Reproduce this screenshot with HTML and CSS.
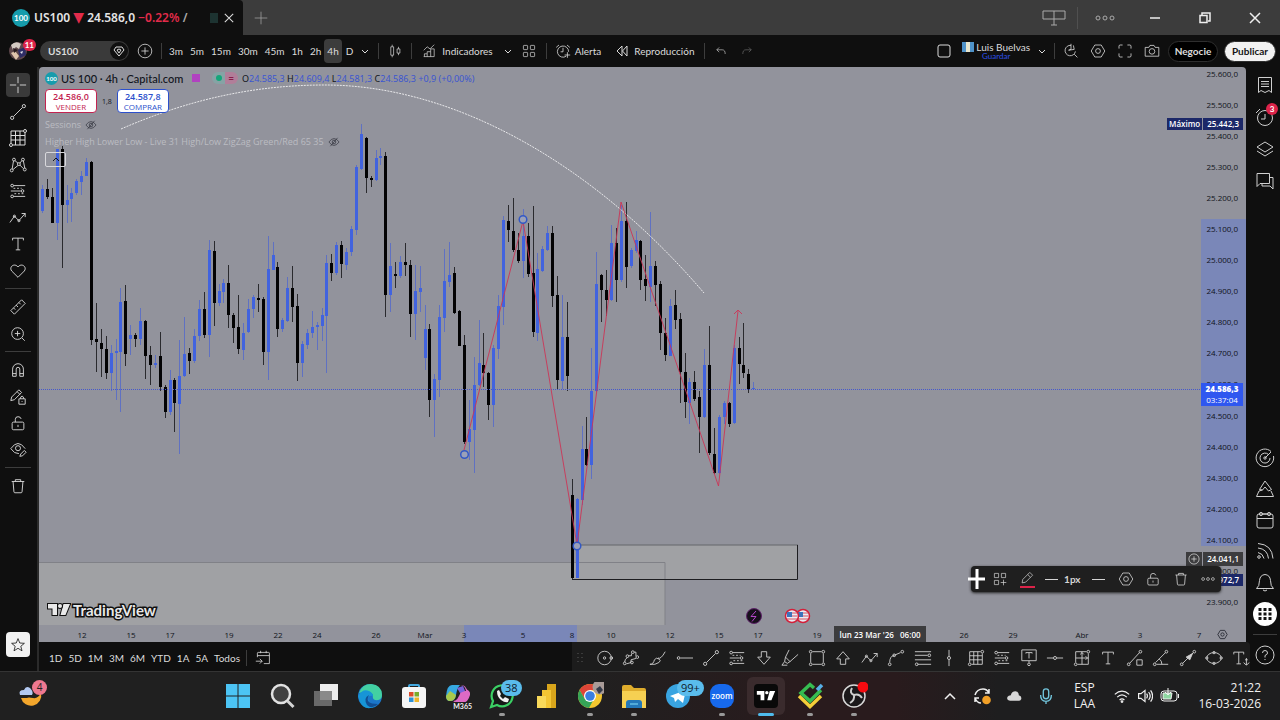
FILE: index.html
```html
<!DOCTYPE html>
<html lang="es">
<head>
<meta charset="utf-8">
<title>US100 24.586,0 −0.22%</title>
<link rel="stylesheet" href="styles.css">
</head>
<body>
<svg class="defs" aria-hidden="true">
  <symbol id="cross" viewBox="0 0 20 20"><path d="M10 1v7M10 12v7M1 10h7M12 10h7"/></symbol>
  <symbol id="trend" viewBox="0 0 20 20"><circle cx="3.500" cy="16.500" r="1.800"/><circle cx="16.500" cy="3.500" r="1.800"/><path d="M5 15L15 5"/></symbol>
  <symbol id="grid" viewBox="0 0 20 20"><path d="M3 3h12M17 5v12H5M3 15V3M3 7.500h14M3 12h14M7.500 3v14M12 3v14"/><circle cx="17" cy="3" r="1.500"/><circle cx="3" cy="17" r="1.500"/></symbol>
  <symbol id="xabcd" viewBox="0 0 20 20"><circle cx="3" cy="16" r="1.600"/><circle cx="5.500" cy="4" r="1.600"/><circle cx="11" cy="9" r="1.600"/><circle cx="15.500" cy="4" r="1.600"/><circle cx="17.500" cy="15" r="1.600"/><path d="M3.500 14.500L5 5.500M6.500 5L10 8M12 8l2.500-3M16 5.500l1.500 8M4.500 15L10 10.500M12 10l4 4"/></symbol>
  <symbol id="fib" viewBox="0 0 20 20"><path d="M5 4h13M2 10h11M5 16h13" /><path d="M5 7h9M6 13h11" stroke-dasharray="2 2"/><circle cx="3.500" cy="4" r="1.500"/><circle cx="15" cy="10" r="1.500"/><circle cx="3.500" cy="16" r="1.500"/></symbol>
  <symbol id="wave" viewBox="0 0 20 20"><path d="M1 15l5-7 5 5 7-8M14 5h4v4"/><circle cx="6" cy="8" r="1.200"/><circle cx="11" cy="13" r="1.200"/></symbol>
  <symbol id="tee" viewBox="0 0 20 20"><path d="M4 6V3.500h12V6M10 3.500v13M7.500 16.500h5"/></symbol>
  <symbol id="heart" viewBox="0 0 20 20"><path d="M10 17L3 10C-.5 5.500 6 .5 10 5.500 14 .5 20.500 5.500 17 10z"/></symbol>
  <symbol id="ruler" viewBox="0 0 20 20"><path d="M2 14L14 2l4 4L6 18zM5 11l2 2M8 8l2 2M11 5l2 2"/></symbol>
  <symbol id="zoomin" viewBox="0 0 20 20"><circle cx="9.500" cy="9.500" r="6.500"/><path d="M9.500 6.500v6M6.500 9.500h6M14.500 14.500l3 3"/></symbol>
  <symbol id="magnet" viewBox="0 0 20 20"><path d="M4 17V9a6 6 0 0 1 12 0v8h-4V9a2 2 0 0 0-4 0v8zM4 14h4M12 14h4"/></symbol>
  <symbol id="penlock" viewBox="0 0 20 20"><path d="M2 14l1-4 8-8 3 3-8 8zM9 4l3 3M11 12h7v6h-7zM13 12v-2q1.500-2 3 0v2M14.500 14.500v1"/></symbol>
  <symbol id="lock" viewBox="0 0 20 20"><rect x="3.500" y="9" width="13" height="8.500" rx="1.500"/><path d="M7 9V6q0-3 3-3t3.500 2.500M10 12v2.500"/></symbol>
  <symbol id="eyepen" viewBox="0 0 20 20"><path d="M2 8.500Q10-3 18 8.500M2 8.500q4 6 9 5.500"/><circle cx="10" cy="8" r="2.800"/><path d="M12 17l1-2.500 4-4 2 2-4 4z"/></symbol>
  <symbol id="trash" viewBox="0 0 20 20"><path d="M3 5h14M7 5V3h6v2M4.500 5l1 11.500q.2 1 1 1h7q.8 0 1-1l1-11.500"/></symbol>
  <symbol id="star" viewBox="0 0 20 20"><path d="M10 2l2.200 5.500 5.800.4-4.500 3.700 1.500 5.700-5-3.200-5 3.200 1.500-5.700L2 7.900l5.800-.4z"/></symbol>
  <symbol id="chev" viewBox="0 0 10 10"><path d="M2 4l3 3 3-3"/></symbol>
  <symbol id="plusc" viewBox="0 0 20 20"><circle cx="10" cy="10" r="8.500"/><path d="M10 5.500v9M5.500 10h9"/></symbol>
  <symbol id="hex" viewBox="0 0 20 20"><path d="M6 2.500h8l4.500 7.500-4.500 7.500H6L1.500 10z"/><circle cx="10" cy="10" r="3"/></symbol>
  <symbol id="dots" viewBox="0 0 20 20"><circle cx="3" cy="10" r="2"/><circle cx="10" cy="10" r="2"/><circle cx="17" cy="10" r="2"/></symbol>
  <symbol id="layout" viewBox="0 0 20 20"><rect x="2" y="2" width="6" height="6" rx="1"/><rect x="12" y="2" width="6" height="6" rx="1"/><rect x="2" y="12" width="6" height="6" rx="1"/><rect x="12" y="12" width="6" height="6" rx="1"/></symbol>
  <symbol id="clock" viewBox="0 0 20 20"><path d="M14 16.500A7 7 0 1 1 17 11M10 6v5H7M1.500 5.500l3.500-3M18.500 5.500L15 2.500M12 15h7M15.500 11.500v7"/></symbol>
  <symbol id="undo" viewBox="0 0 20 20"><path d="M7 4L3 8l4 4M3 8h9q5 0 5 7"/></symbol>
  <symbol id="hideeye" viewBox="0 0 20 20"><path d="M1.500 10Q10-1.500 18.500 10 10 21.500 1.500 10z"/><circle cx="10" cy="10" r="3"/><path d="M4 17L16 3"/></symbol>
  <symbol id="candles" viewBox="0 0 20 20"><path d="M4 4h4v12H4zM6 1v3M6 16v3M13 7h4v6h-4zM15 4v3M15 13v3"/></symbol>
  <symbol id="lens" viewBox="0 0 20 20"><path d="M10 3a6.500 6.500 0 1 0 5.500 7.500M10 1v7l-3 1 7-1-1-5M14 14l4 4"/></symbol>
  <symbol id="full" viewBox="0 0 20 20"><path d="M2.500 7V4q0-1.500 1.500-1.500h3M13 2.500h3q1.500 0 1.500 1.500v3M17.500 13v3q0 1.500-1.500 1.500h-3M7 17.500H4q-1.500 0-1.500-1.500v-3"/></symbol>
  <symbol id="camera" viewBox="0 0 20 20"><path d="M1.500 5.500H6L7.500 3h5L14 5.500h4.500v11h-17z"/><circle cx="10" cy="10.500" r="3.500"/></symbol>
  <symbol id="list" viewBox="0 0 20 20"><path d="M3.500 2.500h13v15L14 15.500l-4 2-4-2-2.500 2zM6 6.500h8M6 9h8M6 11.500h8"/></symbol>
  <symbol id="layers" viewBox="0 0 20 20"><path d="M10 3l8 5-8 5-8-5zM2 12l8 5 8-5"/></symbol>
  <symbol id="chat" viewBox="0 0 20 20"><path d="M2 2.500h12.500v10H5l-3 3zM14.500 6.500H18V18l-3-3H7v-2.500"/></symbol>
  <symbol id="radar" viewBox="0 0 20 20"><path d="M16 3.500A8.800 8.800 0 1 0 18.500 8M13.500 6.500A5 5 0 1 0 15 10M10 10l6-6"/><circle cx="10" cy="10" r="1.200"/></symbol>
  <symbol id="peak" viewBox="0 0 20 20"><path d="M10 2L4.500 10.500l3 .5 2.500-3 3.500 4 3-1.500zM4 12l-2.500 5.500h17L16 12M7.500 11L4 12"/></symbol>
  <symbol id="cal" viewBox="0 0 20 20"><rect x="2" y="4" width="16" height="14" rx="2"/><path d="M2 8.500h16M8 4h4"/><circle cx="6" cy="4" r="1.600"/><circle cx="14" cy="4" r="1.600"/></symbol>
  <symbol id="feed" viewBox="0 0 20 20"><path d="M3 2.500q14 1 15 15M3 7q9.500 1 10.500 10.500M3 11.500q5 1 6 6"/><circle cx="4" cy="16" r="1.300"/></symbol>
  <symbol id="bell" viewBox="0 0 20 20"><path d="M1.500 16.500q3-2 3-8Q5 3 10 2.500q5 .5 5.500 6 0 6 3 8zM8 18q2 2 4 0"/></symbol>
  <symbol id="help" viewBox="0 0 20 20"><circle cx="10" cy="10" r="9"/><path d="M7.500 8q0-2.500 2.500-2.500T12.500 8q0 1.500-2.500 2.500v2M10 14v1"/></symbol>
  <symbol id="circ" viewBox="0 0 20 20"><circle cx="9.500" cy="10" r="7.500"/><circle cx="9.500" cy="10" r="1.300"/><circle cx="17" cy="10" r="1.500"/></symbol>
  <symbol id="poly" viewBox="0 0 20 20"><path d="M3 14.500q0-3.500 3-5M7.500 7.500h3V5M13.500 3.500h2V8M15.500 10.500L10 12v3l-5 1.500"/><circle cx="3" cy="16" r="1.500"/><circle cx="6" cy="8" r="1.500"/><circle cx="12" cy="3.500" r="1.500"/><circle cx="17" cy="9" r="1.500"/><circle cx="11" cy="15" r="1.500"/></symbol>
  <symbol id="brush" viewBox="0 0 20 20"><path d="M1 17q4 0 5-5 2-3 5-1t0 4q-4 3-10 2zM10 10q3 2 8-7"/></symbol>
  <symbol id="ray" viewBox="0 0 20 20"><circle cx="4" cy="10" r="1.500"/><path d="M6 10h14"/></symbol>
  <symbol id="down" viewBox="0 0 20 20"><path d="M7 3h6v6h4l-7 8-7-8h4z"/></symbol>
  <symbol id="up" viewBox="0 0 20 20"><path d="M7 17h6v-6h4l-7-8-7 8h4z"/></symbol>
  <symbol id="marker" viewBox="0 0 20 20"><path d="M9 1L5 9l5 5 9-8M5 9l-1 5 3 2 3-2M1 18h6M4 14l-3 4"/></symbol>
  <symbol id="rect" viewBox="0 0 20 20"><path d="M5 3h10M5 17h10M3 5v10M17 5v10"/><circle cx="3" cy="3" r="1.500"/><circle cx="17" cy="3" r="1.500"/><circle cx="3" cy="17" r="1.500"/><circle cx="17" cy="17" r="1.500"/></symbol>
  <symbol id="curve" viewBox="0 0 20 20"><path d="M3 15q0-7 5-8l7-3"/><circle cx="3" cy="17" r="1.500"/><circle cx="8" cy="7" r="1.500"/><circle cx="17" cy="3" r="1.500"/></symbol>
  <symbol id="lines" viewBox="0 0 20 20"><path d="M1 3h18M1 7h14M1 12h18M4 17h15"/><circle cx="17" cy="7" r="1.500"/><circle cx="3" cy="17" r="1.500"/></symbol>
  <symbol id="vert" viewBox="0 0 20 20"><path d="M10 1v7M10 12v7"/><circle cx="10" cy="10" r="1.700"/></symbol>
  <symbol id="horiz" viewBox="0 0 20 20"><path d="M1 10h7M12 10h7"/><circle cx="10" cy="10" r="1.700"/></symbol>
  <symbol id="tbox" viewBox="0 0 20 20"><path d="M2 1h16v12H2zM6.500 5V4h7v1M10 4v6.500M10 13v2"/><circle cx="10" cy="17" r="1.500"/></symbol>
  <symbol id="box4" viewBox="0 0 20 20"><path d="M3 3h12M17 5v12H5M3 15V3M3 10h14M10 3v14M8 6l2-2 2 2M14 8l2 2-2 2"/><circle cx="17" cy="3" r="1.500"/><circle cx="3" cy="17" r="1.500"/></symbol>
  <symbol id="linesq" viewBox="0 0 20 20"><path d="M4 16L15 4M12 12h6v6h-6z"/><circle cx="3" cy="17" r="1.500"/><circle cx="16" cy="3" r="1.500"/></symbol>
  <symbol id="angle" viewBox="0 0 20 20"><path d="M5 17h13M4 15L15 4M8 11q3 2 3 6"/><circle cx="3" cy="17" r="1.500"/><circle cx="16" cy="3" r="1.500"/></symbol>
  <symbol id="arrow" viewBox="0 0 20 20"><path d="M4 16L16 4"/><path class="solid" d="M8 9l4 3 3-7z"/><circle cx="3" cy="17" r="1.500"/><circle cx="17" cy="3" r="1.500"/></symbol>
  <symbol id="oval" viewBox="0 0 20 20"><ellipse cx="10" cy="10" rx="8" ry="6"/><circle cx="2" cy="10" r="1.300"/><circle cx="18" cy="10" r="1.300"/><circle cx="10" cy="4" r="1.300"/><circle cx="10" cy="16" r="1.300"/></symbol>
  <symbol id="tanchor" viewBox="0 0 20 20"><path d="M2 6V3.500h11V6M7.500 3.500v13M5 16.500h5M16 10v8M13 15q3 5 6 0M14.500 12h3"/></symbol>
  <symbol id="tv" viewBox="0 0 24 14"><path d="M1 1h9v11H5.500V5.500H1zM16.500 1H23l-4.500 11h-5z"/><circle cx="13" cy="3" r="2"/></symbol>
</svg>

<header class="tabs">
  <div class="tab">
    <span class="coin">100</span>
    <span class="tab-text">US100 <span class="red tri">▼</span> 24.586,0 <span class="red">−0.22%</span> <span class="dim">/</span></span>
    <span class="fade"></span>
    <button class="plain" aria-label="Cerrar pestaña"><svg class="ic i14 bold" viewBox="0 0 20 20"><path d="M4 4l12 12M16 4L4 16"/></svg></button>
  </div>
  <button class="plain newtab" aria-label="Nueva pestaña"><svg class="ic i14" viewBox="0 0 20 20"><path d="M10 1v18M1 10h18"/></svg></button>
  <div class="window">
    <button class="plain" aria-label="Monitores"><svg class="ic w24" viewBox="0 0 24 18"><path d="M1 2h22v8H1zM12 2v14M9 16h6"/></svg></button>
    <i class="vr tall"></i>
    <button class="plain" aria-label="Más"><svg class="ic i20"><use href="#dots"/></svg></button>
    <button class="plain" aria-label="Minimizar"><svg class="ic i12 bold" viewBox="0 0 12 12"><path d="M1 6h10"/></svg></button>
    <button class="plain" aria-label="Restaurar"><svg class="ic i12 bold" viewBox="0 0 12 12"><path d="M1 3.500h7v7H1zM3 3V1h8v8H9"/></svg></button>
    <button class="plain" aria-label="Cerrar"><svg class="ic i12 bold" viewBox="0 0 12 12"><path d="M1 1l10 10M11 1L1 11"/></svg></button>
  </div>
</header>

<nav class="toolbar">
  <div class="avatar"><svg viewBox="0 0 20 20" class="i20"><circle cx="10" cy="10" r="9" fill="#5e474b"/><path d="M3 4q5-5 10-1l-2 5-3-2-3 3z" fill="#d3c9c2"/><path d="M10 9l7-3 1 8-6 3z" fill="#2e2c65"/><path d="M3 12l4-2 4 5-3 4z" fill="#dfc4ac"/><path d="M5 7l5 2-4 3z" fill="#271a1f"/><path d="M12 11l3-1-1 3z" fill="#e4e0ea"/></svg><span class="badge">11</span></div>
  <button class="search"><span>US100</span><span class="gem"><svg class="ic i12" viewBox="0 0 12 12"><path d="M3 2h6l2 3-5 6-5-6zM4 5l2 3 2-3-2-1z"/></svg></span></button>
  <button class="plain add" aria-label="Comparar"><svg class="ic i16"><use href="#plusc"/></svg></button>
  <i class="vr"></i>
  <div class="intervals"><button>3m</button><button>5m</button><button>15m</button><button>30m</button><button>45m</button><button>1h</button><button>2h</button><button class="on">4h</button><button>D</button><button aria-label="Intervalos"><svg class="ic i10"><use href="#chev"/></svg></button></div>
  <i class="vr"></i>
  <button class="plain w32" aria-label="Velas"><svg class="ic i14"><use href="#candles"/></svg></button>
  <i class="vr"></i>
  <button class="plain indic"><svg class="ic i14" viewBox="0 0 20 20"><path d="M2 18v-4h4v4M6 14v-3h5v7M11 11V7h5v11H1M1 9l5-5 4 3 6-6"/></svg>Indicadores</button>
  <button class="plain w24" aria-label="Favoritos"><svg class="ic i10"><use href="#chev"/></svg></button>
  <button class="plain lay" aria-label="Plantillas"><svg class="ic i14"><use href="#layout"/></svg></button>
  <i class="vr"></i>
  <button class="plain alert"><svg class="ic i16"><use href="#clock"/></svg>Alerta</button>
  <button class="plain replay"><svg class="ic i12" viewBox="0 0 12 12"><path d="M6 1v10L1 6zM11 1v10L6.500 6z"/></svg>Reproducción</button>
  <i class="vr"></i>
  <button class="plain w32" aria-label="Deshacer"><svg class="ic i12"><use href="#undo"/></svg></button>
  <button class="plain w20 muted" aria-label="Rehacer"><svg class="ic i12 flip"><use href="#undo"/></svg></button>
  <div class="tools">
    <button class="plain w24" aria-label="Diseño"><svg class="ic i14" viewBox="0 0 14 14"><rect x="1" y="1" width="12" height="12" rx="2"/></svg></button>
    <button class="plain user"><span class="name"><span class="flag"></span>Luis Buelvas</span><span class="save">Guardar</span></button>
    <button class="plain w24" aria-label="Gestionar diseños"><svg class="ic i10"><use href="#chev"/></svg></button>
    <i class="vr"></i>
    <div class="quick"><button class="plain" aria-label="Búsqueda rápida"><svg class="ic i16"><use href="#lens"/></svg></button><button class="plain" aria-label="Ajustes"><svg class="ic i16"><use href="#hex"/></svg></button><button class="plain" aria-label="Pantalla completa"><svg class="ic i16"><use href="#full"/></svg></button><button class="plain" aria-label="Captura"><svg class="ic i16"><use href="#camera"/></svg></button></div>
    <button class="pill dark">Negocie</button>
    <button class="pill light">Publicar</button>
  </div>
</nav>

<main class="work">
  <aside class="left">
    <div class="group g8">
      <button class="on" aria-label="Cruz"><svg class="ic i18"><use href="#cross"/></svg></button>
      <button aria-label="Línea"><svg class="ic i18"><use href="#trend"/></svg></button>
      <button aria-label="Gann"><svg class="ic i20"><use href="#grid"/></svg></button>
      <button aria-label="Patrones"><svg class="ic i18"><use href="#xabcd"/></svg></button>
      <button aria-label="Fibonacci"><svg class="ic i18"><use href="#fib"/></svg></button>
      <button aria-label="Previsión"><svg class="ic i18"><use href="#wave"/></svg></button>
      <button aria-label="Texto"><svg class="ic i18"><use href="#tee"/></svg></button>
      <button aria-label="Iconos"><svg class="ic i18"><use href="#heart"/></svg></button>
    </div>
    <hr>
    <div class="group g2">
      <button aria-label="Medir"><svg class="ic i18"><use href="#ruler"/></svg></button>
      <button aria-label="Acercar"><svg class="ic i18"><use href="#zoomin"/></svg></button>
    </div>
    <hr>
    <div class="group g4">
      <button aria-label="Imán"><svg class="ic i18"><use href="#magnet"/></svg></button>
      <button aria-label="Modo dibujo"><svg class="ic i18"><use href="#penlock"/></svg></button>
      <button aria-label="Bloquear"><svg class="ic i18"><use href="#lock"/></svg></button>
      <button aria-label="Ocultar"><svg class="ic i18"><use href="#eyepen"/></svg></button>
    </div>
    <hr>
    <div class="group"><button aria-label="Eliminar"><svg class="ic i18"><use href="#trash"/></svg></button></div>
    <button class="fav" aria-label="Favoritos"><svg class="ic i16"><use href="#star"/></svg></button>
  </aside>

  <section class="center">
    <div class="chart">
      <svg class="canvas" viewBox="39 67 1207 575" preserveAspectRatio="xMinYMin">
        <rect x="39" y="563" width="626" height="62" class="zone"/><path class="zline" d="M39 562.500H665V625"/>
        <rect x="577" y="545" width="221" height="34" class="zone"/><path class="zline2" d="M577 545H798"/><path class="zline" d="M577 562.500H665V579"/><path class="zdark" d="M797.500 545V579.500H572"/>
        <rect x="464" y="625" width="113" height="17" class="range"/>
        <rect x="1201" y="219" width="45" height="327" class="range"/>
        <g id="series"></g>
        <path class="price-line" d="M39 389.500H1201"/>
        <path class="arc" d="M121 129C190 99 255 85 325 85C455 85 595 165 704 293"/>
        <path class="zig" d="M464 450L523 221L577 545L621 202L718.500 486L738 311M734 314l4-4 4 4"/>
        <g class="anchors"><circle cx="464.500" cy="454.500" r="3.800"/><circle cx="523" cy="219.500" r="3.800"/><circle cx="577" cy="546" r="3.800"/></g>
        <g class="event"><circle cx="754" cy="616" r="7.500" fill="#17101c" stroke="#5c2168"/><path d="M756 611l-5 5.500h5l-4 5" fill="none" stroke="#b346c9"/></g>
        <g><g id="us"><circle cx="803" cy="616" r="6.500" fill="#e9edf6" stroke="#d41f39" stroke-width="1.500"/><path d="M803 613h5M803 616h5.500M798 619h10" stroke="#d8505e"/><path d="M798 612h5v5h-5z" fill="#3d73bb"/></g><use href="#us" x="-11"/></g>
        <g class="time"><text x="82" y="638">12</text><text x="131" y="638">15</text><text x="170" y="638">17</text><text x="229" y="638">19</text><text x="278" y="638">22</text><text x="317" y="638">24</text><text x="376" y="638">26</text><text x="425" y="638">Mar</text><text x="464" y="638">3</text><text x="523" y="638">5</text><text x="572" y="638">8</text><text x="611" y="638">10</text><text x="670" y="638">12</text><text x="719" y="638">15</text><text x="758" y="638">17</text><text x="817" y="638">19</text><text x="964" y="638">26</text><text x="1013" y="638">29</text><text x="1082" y="638">Abr</text><text x="1140" y="638">3</text><text x="1199" y="638">7</text></g>
        <rect x="834" y="626" width="92" height="16" fill="#3c3c3e"/><text class="cursor-date" x="880" y="638">lun 23 Mar '26&#160;&#160; 06:00</text>
        <use href="#hex" x="1217" y="629" width="11" height="11" class="axisicon"/>
      </svg>

      <div class="legend">
        <div class="title"><span class="coin small">100</span><span class="sym">US 100 · 4h · Capital.com</span><span class="mag"></span><span class="state"><i></i><b>=</b></span>
          <span class="ohlc">O<em>24.585,3</em> H<em>24.609,4</em> L<em>24.581,3</em> C<em>24.586,3 +0,9 (+0,00%)</em></span></div>
        <div class="quotes"><button class="sell"><b>24.586,0</b>VENDER</button><span>1,8</span><button class="buy"><b>24.587,8</b>COMPRAR</button></div>
        <div class="study">Sessions <svg class="ic i12"><use href="#hideeye"/></svg></div>
        <div class="study">Higher High Lower Low - Live 31 High/Low ZigZag Green/Red 65 35 <svg class="ic i12"><use href="#hideeye"/></svg></div>
        <button class="collapse" aria-label="Contraer"><svg class="ic i10 upside"><use href="#chev"/></svg></button>
        <div class="brand"><svg viewBox="0 0 24 14"><use href="#tv"/></svg>TradingView</div>
      </div>

      <div class="prices"><span>25.600,0</span><span>25.500,0</span><span>25.400,0</span><span>25.300,0</span><span>25.200,0</span><span>25.100,0</span><span>25.000,0</span><span>24.900,0</span><span>24.800,0</span><span>24.700,0</span><span>24.600,0</span><span>24.500,0</span><span>24.400,0</span><span>24.300,0</span><span>24.200,0</span><span>24.100,0</span><span>24.000,0</span><span>23.900,0</span></div>
      <div class="tag high"><span>Máximo</span><span>25.442,3</span></div>
      <div class="tag last"><b>24.586,3</b><span>03:37:04</span></div>
      <div class="tag low"><span>23.972,7</span></div>
      <div class="tag hover"><span><svg class="ic i12"><use href="#plusc"/></svg></span><span>24.041,1</span></div>
      <div class="float">
        <svg class="ic i20 pointer" viewBox="0 0 20 20"><path d="M10 0v20M1 10h17"/></svg>
        <button aria-label="Plantillas"><svg class="ic i14" viewBox="0 0 20 20"><path d="M2 2h6v6H2zM12 2h6v6h-6zM2 12h6v6H2zM15 11v8M11 15h8"/></svg></button>
        <button class="pen" aria-label="Color"><svg class="ic i14" viewBox="0 0 20 20"><path d="M3 17l1-5L14 2l4 4L8 16zM11 5l4 4"/></svg></button>
        <button class="width"><i></i>1px</button>
        <button aria-label="Estilo"><i class="dash"></i></button>
        <button aria-label="Ajustes"><svg class="ic i16"><use href="#hex"/></svg></button>
        <button aria-label="Bloquear"><svg class="ic i16"><use href="#lock"/></svg></button>
        <button aria-label="Eliminar"><svg class="ic i16"><use href="#trash"/></svg></button>
        <button aria-label="Más"><svg class="ic i14"><use href="#dots"/></svg></button>
      </div>
    </div>
    <footer class="bottom">
      <div class="ranges"><button>1D</button><button>5D</button><button>1M</button><button>3M</button><button>6M</button><button>YTD</button><button>1A</button><button>5A</button><button>Todos</button><i class="vr"></i><button class="goto" aria-label="Ir a"><svg class="ic i16" viewBox="0 0 20 20"><path d="M3 9V4q0-1 1-1h13q1 0 1 1v13h-7M3 7h15M7 1v3M14 1v3M1 14h8M6 11l3 3-3 3"/></svg></button></div>
      <div class="shapes">
        <svg class="grip" viewBox="0 0 6 12"><path d="M1 1v12M5 1v12" stroke-dasharray="1 3"/></svg>
        <button aria-label="Círculo"><svg class="ic i18"><use href="#circ"/></svg></button><button aria-label="Ruta"><svg class="ic i18"><use href="#poly"/></svg></button><button aria-label="Pincel"><svg class="ic i18"><use href="#brush"/></svg></button><button aria-label="Rayo"><svg class="ic i18"><use href="#ray"/></svg></button><button aria-label="Tendencia"><svg class="ic i18"><use href="#trend"/></svg></button><button aria-label="Fibonacci"><svg class="ic i18"><use href="#fib"/></svg></button><button aria-label="Flecha abajo"><svg class="ic i18"><use href="#down"/></svg></button><button aria-label="Marcador"><svg class="ic i18"><use href="#marker"/></svg></button><button aria-label="Rectángulo"><svg class="ic i18"><use href="#rect"/></svg></button><button aria-label="Flecha arriba"><svg class="ic i18"><use href="#up"/></svg></button><button aria-label="Trayectoria"><svg class="ic i18"><use href="#wave"/></svg></button><button aria-label="Curva"><svg class="ic i18"><use href="#curve"/></svg></button><button aria-label="Retroceso"><svg class="ic i18"><use href="#lines"/></svg></button><button aria-label="Línea vertical"><svg class="ic i18"><use href="#vert"/></svg></button><button aria-label="Gann"><svg class="ic i18"><use href="#grid"/></svg></button><button aria-label="Extensión"><svg class="ic i18"><use href="#fib"/></svg></button><button aria-label="Nota"><svg class="ic i18"><use href="#tbox"/></svg></button><button aria-label="Línea horizontal"><svg class="ic i18"><use href="#horiz"/></svg></button><button aria-label="Rango"><svg class="ic i18"><use href="#box4"/></svg></button><button aria-label="Texto"><svg class="ic i18"><use href="#tee"/></svg></button><button aria-label="Línea informativa"><svg class="ic i18"><use href="#linesq"/></svg></button><button aria-label="Ángulo"><svg class="ic i18"><use href="#angle"/></svg></button><button aria-label="Flecha"><svg class="ic i18"><use href="#arrow"/></svg></button><button aria-label="Elipse"><svg class="ic i18"><use href="#oval"/></svg></button><button aria-label="Texto anclado"><svg class="ic i18"><use href="#tanchor"/></svg></button>
      </div>
    </footer>
  </section>

  <aside class="right">
    <button aria-label="Lista"><svg class="ic i20"><use href="#list"/></svg></button>
    <button aria-label="Alertas" class="alarm"><svg class="ic i20" viewBox="0 0 20 20"><circle cx="10" cy="11" r="7.500"/><path d="M10 7v5H6M1 6l4-4"/></svg><span class="badge">3</span></button>
    <button aria-label="Capas"><svg class="ic i20"><use href="#layers"/></svg></button>
    <button aria-label="Chat"><svg class="ic i20"><use href="#chat"/></svg></button>
    <div class="lower">
      <button aria-label="Screener"><svg class="ic i20"><use href="#radar"/></svg></button>
      <button aria-label="Pine"><svg class="ic i20"><use href="#peak"/></svg></button>
      <button aria-label="Calendario"><svg class="ic i20"><use href="#cal"/></svg></button>
      <button aria-label="Noticias"><svg class="ic i20"><use href="#feed"/></svg></button>
      <button aria-label="Notificaciones"><svg class="ic i20"><use href="#bell"/></svg></button>
    </div>
    <button class="apps" aria-label="Productos"><svg viewBox="0 0 24 24"><circle cx="12" cy="12" r="12" fill="#fff"/><path d="M5.500 7.500h13M5.500 12h13M5.500 16.500h13" stroke="#111" stroke-width="3" stroke-dasharray="3 2"/></svg></button>
    <hr>
    <button aria-label="Ayuda"><svg class="ic i20"><use href="#help"/></svg></button>
  </aside>
</main>

<footer class="taskbar">
  <button class="weather" aria-label="Tiempo"><svg viewBox="0 0 28 28"><path d="M3 16a10 10 0 0 0 20-5q-3 6-8 5t-6 0z" fill="#f3a62c"/><path d="M2 13q-2-5 4-5 2-5 6-2 4 4 2 7z" fill="#b3c9f1"/></svg><span class="badge pink">4</span></button>
  <div class="pinned">
    <button aria-label="Inicio"><svg viewBox="0 0 28 28"><path d="M2 2h11.500v11.500H2zM14.500 2H26v11.500H14.500zM2 14.500h11.500V26H2zM14.500 14.500H26V26H14.500z" fill="#4cc4f4"/></svg></button>
    <button aria-label="Buscar"><svg viewBox="0 0 28 28"><circle cx="13" cy="12" r="9" fill="#414141" stroke="#e2e2e2" stroke-width="2.500"/><path d="M19.500 19l6 6" stroke="#d4d4d4" stroke-width="3"/></svg></button>
    <button aria-label="Vista de tareas"><svg viewBox="0 0 28 28"><path d="M8 2h18v16H8z" fill="#ededed"/><path d="M2 9h18v15H2z" fill="#777" opacity=".85"/></svg></button>
    <button aria-label="Edge"><svg viewBox="0 0 28 28"><circle cx="14" cy="14" r="12" fill="#1b76c9"/><path d="M3 11Q6 2 15 2q11 1 11 11 0 6-7 5-3-1-2-5Q14 7 3 11z" fill="#43d0a2"/><path d="M2 14Q7 6 13 9q4 2 4 5-5-1-5 3 1 5 8 7Q9 30 4 20z" fill="#1795d6"/><path d="M13 13q-5 9 9 9-6 6-11 1-4-7 2-10z" fill="#114e93"/></svg></button>
    <button aria-label="Tienda"><svg viewBox="0 0 28 28"><path d="M9 8V4q0-1 1-1h8q1 0 1 1v4" fill="none" stroke="#43a8df" stroke-width="2"/><rect x="2" y="5" width="24" height="21" rx="3" fill="#f5f5f5"/><path d="M9 10h4.500v4.500H9z" fill="#dc4b2a"/><path d="M14.500 10H19v4.500h-4.500z" fill="#79ac2c"/><path d="M9 15.500h4.500V20H9z" fill="#2d91d7"/><path d="M14.500 15.500H19V20h-4.500z" fill="#eeb52b"/></svg></button>
    <button aria-label="Microsoft 365"><svg viewBox="0 0 28 28"><path d="M8 3h8q-3 3-4 10-1 6-6 6-4 0-4-5Q3 3 8 3z" fill="#36a8e1"/><path d="M2 14q0 5 4 5 5 0 6-6l-6-4z" fill="#a8c94c"/><path d="M16 3q5 0 6 6h-5q-3 10-8 10 7 6 14 0 5-7 2-10-2-1-3-3-1-3-6-3z" fill="#dd6ac5"/><path d="M13 6l6-2 2 5-5 2z" fill="#7863dc"/></svg><span class="m365">M365</span></button>
    <button aria-label="WhatsApp" class="run"><svg viewBox="0 0 28 28"><path d="M3 25l2-6a10.500 10.500 0 1 1 4 4z" fill="#151a17" stroke="#3bd064" stroke-width="2.200"/><path d="M9 9l2-1 2 4-1 2 3 3 2-2 4 2-1 3q-3 1-7-2-4-3-4-9z" fill="#f1f1f1"/></svg><span class="badge sky">38</span></button>
    <button aria-label="Power BI"><svg viewBox="0 0 28 28"><path d="M15 2h9v24h-9z" fill="#d8a51b"/><path d="M10 8h9v18h-9z" fill="#f2c533"/><path d="M5 14h9v12H5z" fill="#f8d95a"/></svg></button>
    <button aria-label="Chrome" class="run"><svg viewBox="0 0 28 28"><circle cx="14" cy="14" r="12" fill="#f3c72f"/><path d="M3.600 8A12 12 0 0 1 24.400 8H14l-5.200 9z" fill="#dd4538"/><path d="M3.600 8a12 12 0 0 0 9.400 18l5.200-9.500L14 18l-5.200-1z" fill="#35a457"/><circle cx="14" cy="14" r="6" fill="#fff"/><circle cx="14" cy="14" r="4.800" fill="#397fe0"/><circle cx="24" cy="5" r="7.500" fill="#a99b98"/><path d="M20 7l4-3 3 4-4 4z" fill="#333a49"/></svg></button>
    <button aria-label="Explorador" class="run"><svg viewBox="0 0 28 28"><path d="M2 5q0-2 2-2h7l3 3h10q2 0 2 2v18H2z" fill="#dfac2c"/><path d="M2 9h24v17H2z" fill="#f6d052"/><path d="M6 26v-5q0-3 3-3h10q3 0 3 3v5z" fill="#2378b8"/><path d="M10 22h8" stroke="#52abd8" stroke-width="2"/></svg></button>
    <button aria-label="Telegram"><svg viewBox="0 0 28 28"><circle cx="14" cy="14" r="12" fill="#39a4e1"/><path d="M6 14l16-6-3 13-5-4-3 3-1-4z" fill="#fff"/></svg><span class="badge sky">99+</span></button>
    <button aria-label="Zoom" class="run zoom"><span>zoom</span></button>
    <button aria-label="TradingView" class="run active"><svg viewBox="0 0 28 28"><rect x="2" y="2" width="24" height="24" rx="4" fill="#090909"/><use href="#tv" x="4" y="8" width="20" height="12" fill="#fff"/></svg></button>
    <button aria-label="Capital" class="run"><svg viewBox="0 0 28 28"><path d="M3 14l11 10.500L25 14" fill="none" stroke="#f3ce39" stroke-width="3.500"/><path d="M18 6l-4-3.500L5 11l9 8 11-11" fill="none" stroke="#36bd51" stroke-width="3.500"/><path d="M9.500 10.500l4.500 4 4-4" fill="none" stroke="#1e1e1e"/><path d="M21 8l5-5" stroke="#56afe7" stroke-width="3.500"/></svg></button>
    <button aria-label="OBS" class="run"><svg viewBox="0 0 28 28"><circle cx="14" cy="14" r="11" fill="#1b181a" stroke="#d8d8d8" stroke-width="1.500"/><path d="M14 13Q9 11 12 6M14 13q5-2 8 3M14 13q1 5-4 8" fill="none" stroke="#cfcfcf" stroke-width="2"/><circle cx="23" cy="5" r="5.500" fill="#f50b10"/></svg></button>
  </div>
  <div class="tray">
    <button aria-label="Mostrar iconos ocultos"><svg class="ic i12 bold" viewBox="0 0 12 12"><path d="M1 9l5-5 5 5"/></svg></button>
    <button aria-label="Actualizar"><svg class="ic i20 bold" viewBox="0 0 20 20"><path d="M3 9q2-6 8-6 4 0 6 4M17 3v4h-4M3 16v-4h4M3 12q2 5 6 5"/><circle cx="14.500" cy="14" r="4.300" fill="#f2a027" stroke="none"/></svg></button>
    <button aria-label="OneDrive"><svg class="i16" viewBox="0 0 20 20"><path d="M5 16q-5-1-3-5 1-2 4-2 1-5 6-5 4 1 4 5 4 1 3 5-1 2-3 2z" fill="#d7d7d7"/></svg></button>
    <button aria-label="Micrófono"><svg class="ic i18 bold mic" viewBox="0 0 20 20"><rect x="7" y="2" width="6" height="11" rx="3"/><path d="M4 9q0 7 6 7t6-7M10 16v3"/></svg></button>
    <div class="lang">ESP<br>LAA</div>
    <div class="net"><svg class="ic i16 bold" viewBox="0 0 20 20"><path d="M1 8q9-8 18 0M4 11.500q6-6 12 0M7 15q3-3 6 0"/><circle cx="10" cy="17" r="1"/></svg><svg class="ic i16 bold" viewBox="0 0 20 20"><path d="M2 7v6h3l5 4V3L5 7zM12 7q2 3 0 6M14.500 5q4 5 0 10M17 3q5 7 0 14"/></svg><svg class="ic i20" viewBox="0 0 20 20"><rect x="1" y="5" width="16" height="10" rx="3"/><path d="M18.500 8v4" /><path d="M3 7h9l-1 6H3z" fill="#8ed8a1"/><path d="M8 2v7M5 6l3 3 3-3"/></svg></div>
    <div class="date">21:22<br>16-03-2026</div>
  </div>
</footer>
<script src="chart.js"></script>
</body>
</html>
```
FILE: chart.js
```js
// Each candle: centre, high, body top, body bottom, low, colour (b rising, k falling).
const candles = `42 185 189 211 213 b|47 179 189 197 199 k|52 188 197 223 223 k|57 149 149 223 240 b|62 146 149 205 268 k|67 185 200 205 223 b|72 188 193 199 222 b|77 179 181 193 195 b|82 171 176 182 195 b|87 158 162 176 176 b|92 161 162 340 345 k|96 303 339 342 372 k|102 329 343 349 377 k|106 336 349 373 379 k|111 345 353 373 391 b|116 339 351 353 400 b|121 288 302 352 412 b|126 285 301 354 366 k|131 325 335 339 355 b|136 333 335 339 347 k|141 308 321 339 345 b|146 320 321 356 379 k|151 346 355 365 385 k|156 355 363 365 368 b|160 332 356 387 391 k|165 385 387 412 418 k|170 370 380 412 415 b|175 378 380 403 432 k|180 340 376 404 454 b|185 317 354 376 377 b|190 348 353 361 374 k|195 329 336 361 363 b|200 300 309 336 341 b|204 292 309 335 338 k|209 240 250 335 357 b|214 241 251 303 326 k|219 284 291 303 306 b|224 279 283 292 303 b|229 265 283 315 328 k|233 313 315 328 343 k|239 295 327 349 354 k|244 323 333 350 360 b|249 299 309 332 333 b|253 295 297 309 318 b|258 284 298 300 312 k|263 297 299 352 365 k|268 236 269 352 380 b|273 242 255 270 270 b|278 262 267 329 337 k|283 318 320 329 332 b|288 277 288 321 322 b|292 266 288 307 322 k|297 294 306 363 381 k|302 341 344 363 377 b|307 329 333 345 349 b|312 311 327 333 338 b|317 322 325 327 350 b|322 308 315 326 341 b|327 255 263 316 373 b|332 254 263 273 281 k|337 242 245 273 275 b|342 241 245 264 278 k|347 248 252 265 270 b|352 226 229 252 256 b|357 165 167 230 235 b|361 124 134 169 170 b|366 137 138 178 193 k|371 176 178 180 187 k|376 150 158 180 181 b|381 148 156 158 165 b|386 152 156 295 317 k|391 243 266 295 312 b|396 262 274 276 288 k|401 256 262 276 278 b|406 243 262 265 276 k|410 260 265 314 337 k|415 265 291 314 340 b|420 266 288 292 312 b|425 305 329 358 370 b|430 324 329 400 417 k|435 374 379 400 437 b|440 305 317 380 397 b|444 249 281 318 332 b|449 242 275 282 287 b|454 267 273 313 314 k|459 310 311 346 346 k|464 335 345 442 444 k|469 400 429 442 460 b|474 357 385 430 473 b|479 320 363 385 386 b|484 333 365 373 387 k|489 372 373 405 420 k|494 345 348 405 427 b|499 295 306 349 359 b|504 216 220 307 325 b|508 205 221 230 242 k|513 198 231 250 252 k|518 233 250 261 263 k|523 209 236 261 278 b|528 223 236 274 277 k|533 206 273 332 337 k|538 253 269 333 341 b|543 246 249 271 272 b|548 226 233 250 251 b|553 226 233 296 307 k|558 276 295 380 389 k|563 295 337 381 389 b|567 302 337 376 391 k|573 479 495 578 579 k|577 498 499 578 578 b|582 426 449 500 505 b|587 417 449 465 466 k|592 348 391 465 479 b|597 252 284 391 392 b|602 274 275 290 322 k|607 270 290 300 316 k|611 225 243 300 301 b|616 228 243 280 302 k|621 205 221 280 282 b|627 202 221 267 288 k|631 248 250 266 268 b|636 231 240 251 253 b|641 240 241 280 290 k|646 255 279 286 301 k|651 212 266 287 302 b|656 261 266 285 306 k|661 281 284 333 350 k|665 318 333 355 361 k|671 299 306 356 356 b|675 290 305 320 329 k|680 313 319 372 403 k|685 353 372 402 418 k|690 378 382 403 424 b|695 371 382 399 401 k|700 391 397 417 453 k|705 349 365 417 418 b|710 326 365 453 455 k|715 428 454 473 474 k|719 415 417 473 474 b|724 401 403 417 424 b|729 402 403 424 427 k|734 345 348 423 424 b|739 337 348 364 384 k|744 323 365 373 378 k|749 369 374 389 393 k|754 382 388 389 390 b`;

// Bars share one pitch; columns are snapped to whole pixels so that bodies stay crisp.
const first = 42, pitch = 4.905;

document.getElementById('series').innerHTML = candles.split('|').map(row => {
  const [x, high, top, bottom, low, side] = row.split(' ');
  const column = Math.round(first + pitch * Math.round((x - first) / pitch));
  return `<g class="${side}"><path d="M${column + .5} ${high}V${low}"/><rect x="${column - 1}" y="${top}" width="3" height="${bottom - top}"/></g>`;
}).join('');
```
FILE: styles.css
```css
* { box-sizing: border-box; }
body { margin: 0; height: 100vh; display: flex; flex-direction: column; overflow: hidden; background: #0f0f0f; color: #dcdcdc; font-family: Lato, "Open Sans", sans-serif; font-size: 10px; }
button { margin: 0; padding: 0; border: 0; background: none; color: inherit; font: inherit; display: flex; align-items: center; justify-content: center; flex: none; }
svg { flex: none; }
.defs { position: absolute; width: 0; height: 0; }
.ic { fill: none; stroke: currentColor; stroke-width: 1; }
.ic.bold { stroke-width: 1.5; }
.solid { fill: currentColor; }
.i10 { width: 10px; height: 10px; }
.i12 { width: 12px; height: 12px; }
.i14 { width: 14px; height: 14px; }
.i16 { width: 16px; height: 16px; }
.i18 { width: 18px; height: 18px; }
.i20 { width: 20px; height: 20px; }
.w20 { width: 20px; }
.w24 { width: 24px; }
.w32 { width: 32px; }
.flip { transform: scaleX(-1); }
.upside { transform: rotate(180deg); }
.muted { color: #777; }
.vr { width: 1px; height: 16px; background: #3d3d3d; flex: none; }
.vr.tall { height: 22px; background: #505050; }
.red { color: #e22b4a; }
.dim { color: #aaa; }
.badge { position: absolute; top: -2px; right: -8px; min-width: 12px; height: 12px; padding: 0 2px; border-radius: 6px; background: #dc2349; color: #fff; font-size: 8px; line-height: 12px; text-align: center; font-weight: 700; }

.tabs { height: 35px; display: flex; align-items: center; background: #3c3c3c; flex: none; }
.tab { width: 243px; height: 35px; padding: 0 7px 0 12px; display: flex; align-items: center; background: #0f0f0f; border-radius: 0 4px 0 0; }
.tab-text { margin-left: 4px; font: 600 12px "Noto Sans", "Open Sans", sans-serif; white-space: nowrap; color: #e4e4e4; flex: 1; }
.tri { font-size: 14px; line-height: 12px; font-family: "DejaVu Sans", sans-serif; }
.fade { width: 8px; height: 10px; margin-right: 4px; background: #1d3331; }
.coin { width: 18px; height: 18px; border-radius: 50%; background: #169cac; color: #fff; font: 700 8px/18px Lato, sans-serif; text-align: center; flex: none; }
.coin.small { width: 13px; height: 13px; font-size: 6px; line-height: 13px; }
.newtab { width: 35px; color: #aaa; }
.window { margin-left: auto; display: flex; align-items: center; color: #aaa; }
.window button { width: 50px; height: 34px; }
.window button:first-child { width: 46px; }
.window svg.w24 { width: 24px; height: 18px; }
.window .vr { margin-right: 2px; }
.window .bold { color: #eee; }

.toolbar { height: 32px; display: flex; align-items: center; flex: none; }
.avatar { position: relative; width: 20px; height: 20px; margin: 0 12px 0 8px; }
.search { width: 89px; height: 20px; padding: 0 1px 0 8px; justify-content: space-between; border-radius: 10px; background: #3a3a3a; font-weight: 700; }
.gem { width: 18px; height: 18px; border-radius: 50%; background: #111; display: grid; place-items: center; }
.add { width: 32px; }
.intervals { display: flex; padding: 0 5px 0 3px; flex: none; }
.intervals button { height: 24px; padding: 0 3px 0 4px; }
.intervals .on { background: #3c3c3c; border-radius: 4px; padding: 0 3px; }
.indic { gap: 5px; padding: 0 3px 0 11px; }
.lay { width: 18px; margin-right: 8px; }
.alert { gap: 4px; padding-left: 8px; }
.replay { gap: 6px; padding: 0 9px 0 15px; }
.tools { margin-left: auto; padding-right: 4px; display: flex; align-items: center; }
.user { flex-direction: column; margin-left: 6px; line-height: 10px; }
.name { display: flex; gap: 2px; }
.flag { width: 12px; height: 10px; background: linear-gradient(90deg, #4f92c8 30%, #e8e6ce 30% 70%, #4f92c8 70%); }
.save { color: #2c50e8; font-size: 8px; line-height: 8px; }
.quick { display: flex; padding-left: 2px; }
.quick button { width: 27px; height: 24px; }
.pill { height: 21px; border-radius: 11px; border: 1px solid #2e2e2e; font-weight: 700; }
.pill.dark { width: 50px; margin: 0 6px 0 3px; background: #000; }
.pill.light { width: 52px; background: #f2f2f2; color: #151515; }

.work { flex: 1; min-height: 0; display: flex; border-bottom: 1px solid #343434; }
.left { width: 39px; padding: 6px 2px 14px 0; border-right: 2px solid #2b2b2b; display: flex; flex-direction: column; align-items: center; flex: none; }
.group { display: flex; flex-direction: column; justify-content: space-between; }
.group button { width: 24px; height: 24px; }
.group .on { background: #3a3a3a; border-radius: 4px; }
.g8 { height: 210px; }
.g2 { height: 51px; }
.g4 { height: 104px; }
hr { width: 26px; margin: 5px 0 6px; border: 0; border-top: 1px solid #3d3d3d; }
.fav { width: 24px; height: 25px; margin-top: auto; border-radius: 4px; background: #f2f2f2; color: #111; }

.center { flex: 1; min-width: 0; display: flex; flex-direction: column; }
.chart { position: relative; flex: 1; min-height: 0; margin-right: 4px; display: grid; grid-template: minmax(0, 1fr) 17px / minmax(0, 1fr) 45px; overflow: hidden; background: #92939c; color: #10131b; border-radius: 4px 4px 0 0; }
.canvas { grid-area: 1 / 1 / 3 / 3; width: 100%; height: 100%; }
.zone { fill: #a0a1a4; }
.zline { fill: none; stroke: #808187; }
.zline2 { fill: none; stroke: #65666b; }
.zdark { fill: none; stroke: #1d1d20; }
.range { fill: #7a87b8; }
.b path { stroke: #4e66cf; stroke-opacity: .75; }
.b rect { fill: #4163df; }
.k path { stroke: #18181b; stroke-opacity: .85; }
.k rect { fill: #030304; }
.price-line { stroke: #4558cc; stroke-dasharray: 1 1; }
.arc { fill: none; stroke: #e8e8ea; stroke-dasharray: 2 1; }
.zig { fill: none; stroke: #cc3557; stroke-opacity: .9; }
.anchors { fill: #9aa0b8; stroke: #3358c4; stroke-width: 1.5; }
.time { font-size: 8px; text-anchor: middle; fill: #10131b; font-family: "Open Sans", sans-serif; }
.cursor-date { font: 600 8px "Open Sans", sans-serif; text-anchor: middle; fill: #fff; }
.axisicon { fill: none; stroke: #22252e; stroke-width: 1.5; }
.legend { grid-area: 1 / 1; padding: 4px 6px 5px; display: flex; flex-direction: column; align-items: flex-start; }
.title { height: 14px; display: flex; align-items: center; white-space: nowrap; }
.sym { margin-left: 3px; width: 123px; font: 500 11px Lato, sans-serif; }
.mag { width: 8px; height: 8px; margin-left: 8px; background: #b142c0; }
.state { margin-left: 12px; width: 26px; height: 12px; display: flex; align-items: center; justify-content: space-between; border-radius: 6px; background: linear-gradient(90deg, #86a3a5 50%, #b17e99 50%); padding: 0 4px; }
.state i { width: 6px; height: 6px; border-radius: 50%; background: #15a67a; }
.state b { color: #8b1c49; line-height: 10px; }
.ohlc { margin-left: 4px; font: 9px "Noto Sans", "Open Sans", sans-serif; }
.ohlc em { font-style: normal; color: #3c56d0; }
.quotes { margin-top: 4px; display: flex; align-items: center; gap: 5px; font: 7px "Open Sans", sans-serif; }
.quotes button { width: 52px; height: 24px; flex-direction: column; background: #fff; border: 1px solid; border-radius: 4px; line-height: 9px; font-size: 8px; }
.quotes b { font-size: 9px; font-weight: 600; line-height: 10px; }
.sell { color: #c32350; }
.buy { color: #2c50cc; }
.study { height: 17px; display: flex; align-items: center; gap: 4px; color: #bbbcc2; font: 9px "Open Sans", sans-serif; }
.quotes + .study { margin-top: 3px; }
.study svg { color: #22242d; }
.collapse { margin-top: 2px; width: 21px; height: 15px; border: 1px solid #d8d8dc; border-radius: 2px; }
.brand { margin: auto 0 0 2px; display: flex; align-items: center; gap: 2px; color: #e9e9e9; font: 700 15px/20px Lato, sans-serif; -webkit-text-stroke: 3px #101010; paint-order: stroke fill; }
.brand svg { width: 24px; height: 14px; fill: #e9e9e9; stroke: #101010; stroke-width: 2; paint-order: stroke fill; overflow: visible; }
.prices { grid-area: 1 / 2; display: flex; flex-direction: column; justify-content: space-between; align-items: flex-end; padding: 1px 8px 17px 0; font: 8px/12px "Open Sans", sans-serif; }
.tag { position: absolute; right: 3px; display: flex; gap: 1px; font: 600 8px/12px "Open Sans", sans-serif; color: #fff; }
.tag > span { padding: 0 4px; }
.high { top: 51px; }
.high span, .low span { background: #1c2868; }
.high span:first-child { padding: 0 2px; }
.last { top: 316px; width: 42px; flex-direction: column; padding: 1px 0; background: #2f57f0; line-height: 10px; text-align: center; }
.last span { font-weight: 400; }
.hover { top: 485px; }
.hover span { background: #3c3c3e; line-height: 14px; }
.hover span:first-child { width: 16px; padding: 1px 2px; }
.hover svg { display: block; }
.low { top: 507px; }
.float { position: absolute; right: 25px; bottom: 50px; width: 250px; height: 26px; padding: 0 1px 0 17px; display: flex; align-items: center; justify-content: space-between; border-radius: 4px; background: #1f1f1f; color: #d5d5d5; box-shadow: 0 1px 3px #222; }
.float button { width: 24px; height: 24px; }
.float .pen { flex-direction: column; }
.pen::after { content: ""; width: 15px; height: 2px; background: #dc2349; margin-top: 1px; }
.float .width { width: 40px; gap: 6px; font-weight: 700; }
.float i { width: 13px; height: 1px; background: #d5d5d5; }
.pointer { position: absolute; left: -4px; top: 3px; stroke-width: 3; color: #fff; }
.bottom { height: 29px; padding-top: 2px; display: flex; flex: none; background: linear-gradient(90deg, #0f0f0f 533px, #1c1c1c 533px); border-radius: 0 4px 0 0; }
.ranges { width: 533px; display: flex; align-items: center; gap: 6px; padding-left: 10px; flex: none; }
.ranges .goto { margin-left: 2px; }
.shapes { flex: 1; display: flex; align-items: center; justify-content: space-between; padding-left: 5px; color: #d0d0d0; }
.shapes button { width: 18px; height: 24px; }
.grip { width: 6px; height: 12px; margin-right: 4px; stroke: #5a5a5a; }

.right { width: 30px; padding: 6px 0 4px; display: flex; flex-direction: column; align-items: center; gap: 8px; color: #cfcfcf; flex: none; }
.right button { position: relative; width: 24px; height: 24px; }
.right .badge { right: -1px; }
.lower { margin-top: auto; display: flex; flex-direction: column; gap: 7px; }
.apps svg { width: 24px; height: 24px; }
.right hr { width: 24px; margin: 0; }

.taskbar { height: 48px; display: flex; align-items: center; padding: 0 19px 0 18px; background: linear-gradient(90deg, #202020 45%, #291b1d 62%, #291b1d 70%, #1e1e1f 78%); font: 12px/16px "Open Sans", sans-serif; color: #f0f0f0; flex: none; }
.taskbar button { position: relative; width: 28px; height: 28px; }
.taskbar button > svg:not(.ic):not(.i16) { width: 28px; height: 28px; }
.taskbar .badge { font-weight: 400; }
.taskbar .pink { top: -2px; right: -1px; width: 15px; height: 15px; border-radius: 50%; background: #ee7890; color: #222; font-size: 10px; line-height: 15px; }
.taskbar .sky { top: -2px; left: 13px; right: auto; width: max-content; height: 16px; padding: 0 4px; border-radius: 8px; background: #5abcec; color: #10202b; font-size: 11px; line-height: 16px; }
.pinned { margin-left: 178px; display: flex; gap: 16px; }
.m365 { position: absolute; bottom: 0; right: 0; font: 700 7px/8px Lato, sans-serif; background: #1f1f1f; }
.run::after { content: ""; position: absolute; bottom: -6px; left: 11px; width: 6px; height: 3px; border-radius: 2px; background: #999; }
.run.active::after { width: 16px; left: 6px; background: #4fbbed; }
.active { background: #3a2b2d; box-shadow: 0 0 0 5px #3a2b2d; border-radius: 2px; }
.zoom span { width: 24px; height: 24px; border-radius: 9px; background: #1769ec; color: #fff; font: 600 8px/23px "Open Sans", sans-serif; }
.tray { margin-left: auto; display: flex; align-items: center; gap: 4px; }
.mic { color: #72c5dc; }
.lang { width: 40px; text-align: center; }
.net { display: flex; align-items: center; gap: 7px; margin: 0 14px 0 6px; }
.date { text-align: right; }
```
